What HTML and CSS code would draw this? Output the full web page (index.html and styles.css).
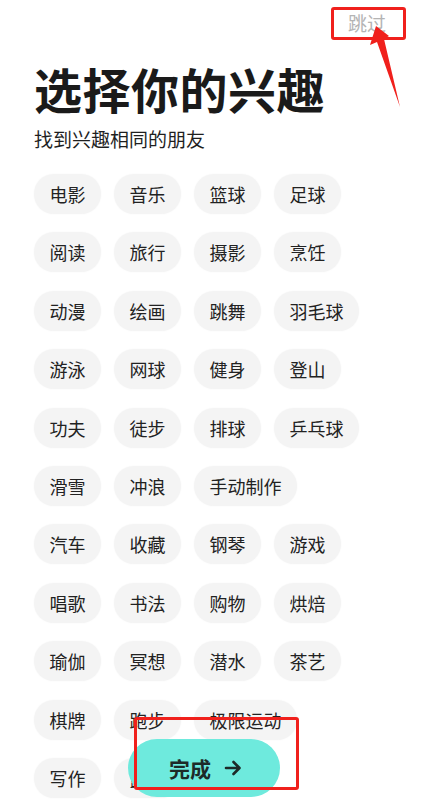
FILE: index.html
```html
<!DOCTYPE html>
<html lang="zh-CN">
<head>
  <meta charset="UTF-8" />
  <meta name="viewport" content="width=device-width, initial-scale=1" />
  <title>选择你的兴趣</title>
  <link rel="stylesheet" href="styles.css">
</head>
<body>

  <div class="screen">
    <a class="skip" href="#">跳过</a>

    <h1 class="title">选择你的兴趣</h1>
    <p class="subtitle">找到兴趣相同的朋友</p>

    <ul class="tags">
      <li class="tag">电影</li>
      <li class="tag">音乐</li>
      <li class="tag">篮球</li>
      <li class="tag">足球</li>
      <li class="tag">阅读</li>
      <li class="tag">旅行</li>
      <li class="tag">摄影</li>
      <li class="tag">烹饪</li>
      <li class="tag">动漫</li>
      <li class="tag">绘画</li>
      <li class="tag">跳舞</li>
      <li class="tag">羽毛球</li>
      <li class="tag">游泳</li>
      <li class="tag">网球</li>
      <li class="tag">健身</li>
      <li class="tag">登山</li>
      <li class="tag">功夫</li>
      <li class="tag">徒步</li>
      <li class="tag">排球</li>
      <li class="tag">乒乓球</li>
      <li class="tag">滑雪</li>
      <li class="tag">冲浪</li>
      <li class="tag">手动制作</li>
      <li class="tag">汽车</li>
      <li class="tag">收藏</li>
      <li class="tag">钢琴</li>
      <li class="tag">游戏</li>
      <li class="tag">唱歌</li>
      <li class="tag">书法</li>
      <li class="tag">购物</li>
      <li class="tag">烘焙</li>
      <li class="tag">瑜伽</li>
      <li class="tag">冥想</li>
      <li class="tag">潜水</li>
      <li class="tag">茶艺</li>
      <li class="tag">棋牌</li>
      <li class="tag">跑步</li>
      <li class="tag">极限运动</li>
      <li class="tag">写作</li>
      <li class="tag">露营</li>
    </ul>

    <button class="btn-done">
      完成
      <svg class="arrow" width="20" height="20" viewBox="0 0 20 20" fill="none">
        <path d="M3 10h13M10.5 4l6 6-6 6" stroke="#1d2a28" stroke-width="2.6" stroke-linecap="round" stroke-linejoin="round"/>
      </svg>
    </button>

    <!-- red markers -->
    <div class="mark mark-skip"></div>
    <div class="mark mark-done"></div>
    <svg class="pointer" width="431" height="120" viewBox="0 0 431 120">
      <polygon points="376,26 370,45 377,42 400,107 384,39 389,36" fill="#f0201c"/>
    </svg>
  </div>

</body>
</html>
```

FILE: styles.css
```css
* {
  box-sizing: border-box;
}
html, body {
  margin: 0;
  height: 100%;
}
body {
  font-family: "Noto Sans CJK SC", "Noto Sans", sans-serif;
  background: #ffffff;
  color: #1f1f1f;
  overflow: hidden;
}
.screen {
  position: relative;
  height: 800px;
  padding: 60px 0 0 34px;
}
.skip {
  position: absolute;
  top: 9px;
  left: 348px;
  font-size: 19px;
  line-height: 28px;
  color: #b4b4b4;
  text-decoration: none;
}
.title {
  margin: 0;
  font-size: 48px;
  line-height: 56px;
  font-weight: 700;
  color: #1a1a1a;
  letter-spacing: 0.5px;
}
.subtitle {
  margin: 10px 0 0;
  font-size: 19px;
  line-height: 26px;
  color: #1f1f1f;
}
.tags {
  list-style: none;
  margin: 22px 0 0;
  padding: 0;
  width: 336px;
  display: flex;
  flex-wrap: wrap;
  column-gap: 13px;
  row-gap: 18.4px;
}
.tag {
  height: 40px;
  padding: 0 15.5px;
  font-size: 18px;
  line-height: 40px;
  color: #222;
  background: #f4f4f4;
  border-radius: 20px;
  box-shadow: 0 0 2px rgba(0,0,0,0.04);
}
.btn-done {
  position: absolute;
  left: 128px;
  top: 739px;
  width: 152px;
  height: 58px;
  border: none;
  border-radius: 29px;
  background: #6eeadd;
  display: flex;
  align-items: center;
  justify-content: center;
  gap: 12px;
  font-family: inherit;
  font-size: 21px;
  font-weight: 700;
  color: #1d2a28;
  padding: 0 0 0 4px;
  cursor: pointer;
}
.mark {
  position: absolute;
  border: 3px solid #f0201c;
  border-radius: 3px;
}
.mark-skip {
  left: 331px;
  top: 7px;
  width: 75px;
  height: 33px;
}
.mark-done {
  left: 134px;
  top: 717px;
  width: 165px;
  height: 73px;
}
.pointer {
  position: absolute;
  left: 0;
  top: 0;
}
```
